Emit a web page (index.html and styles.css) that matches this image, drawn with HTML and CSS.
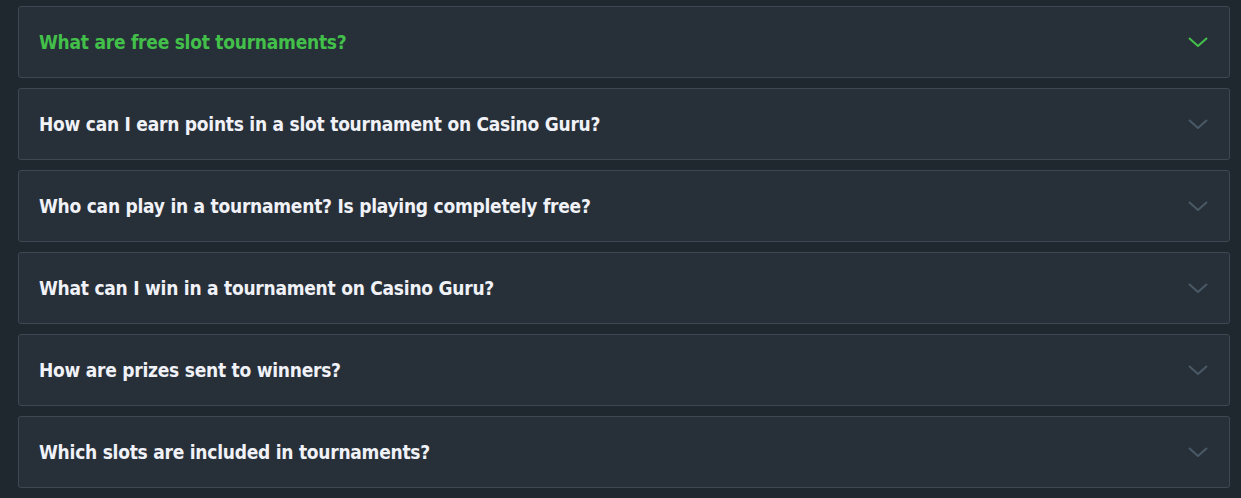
FILE: index.html
```html
<!DOCTYPE html>
<html>
<head>
<meta charset="utf-8">
<link rel="stylesheet" href="styles.css">
</head>
<body>
<div class="faq">
  <div class="item open"><span class="q">What are free slot tournaments?</span><svg class="chev" viewBox="0 0 20 10" width="20" height="10"><path d="M1 1 L10 9 L19 1" fill="none" stroke="currentColor" stroke-width="2"/></svg></div>
  <div class="item"><span class="q">How can I earn points in a slot tournament on Casino Guru?</span><svg class="chev" viewBox="0 0 20 10" width="20" height="10"><path d="M1 1 L10 9 L19 1" fill="none" stroke="currentColor" stroke-width="2"/></svg></div>
  <div class="item"><span class="q">Who can play in a tournament? Is playing completely free?</span><svg class="chev" viewBox="0 0 20 10" width="20" height="10"><path d="M1 1 L10 9 L19 1" fill="none" stroke="currentColor" stroke-width="2"/></svg></div>
  <div class="item"><span class="q">What can I win in a tournament on Casino Guru?</span><svg class="chev" viewBox="0 0 20 10" width="20" height="10"><path d="M1 1 L10 9 L19 1" fill="none" stroke="currentColor" stroke-width="2"/></svg></div>
  <div class="item"><span class="q">How are prizes sent to winners?</span><svg class="chev" viewBox="0 0 20 10" width="20" height="10"><path d="M1 1 L10 9 L19 1" fill="none" stroke="currentColor" stroke-width="2"/></svg></div>
  <div class="item"><span class="q">Which slots are included in tournaments?</span><svg class="chev" viewBox="0 0 20 10" width="20" height="10"><path d="M1 1 L10 9 L19 1" fill="none" stroke="currentColor" stroke-width="2"/></svg></div>
</div>
</body>
</html>
```
FILE: styles.css
```css
html, body { margin: 0; background: #1f272f; }
body { padding: 6px 11px 0 18px; }
.faq { display: flex; flex-direction: column; gap: 10px; }
.item {
  display: flex; align-items: center; justify-content: space-between;
  height: 72px; box-sizing: border-box;
  background: #273039; border: 1px solid #3d4852; border-radius: 3px;
  padding: 0 21px 0 20px;
}
.q {
  font-family: "DejaVu Sans Condensed", "DejaVu Sans", sans-serif;
  font-weight: bold; font-size: 19px; letter-spacing: -0.25px; color: #f0f2f7;
}
.chev { color: #4a5966; display: block; }
.open .q, .open .chev { color: #43c04a; }
```
